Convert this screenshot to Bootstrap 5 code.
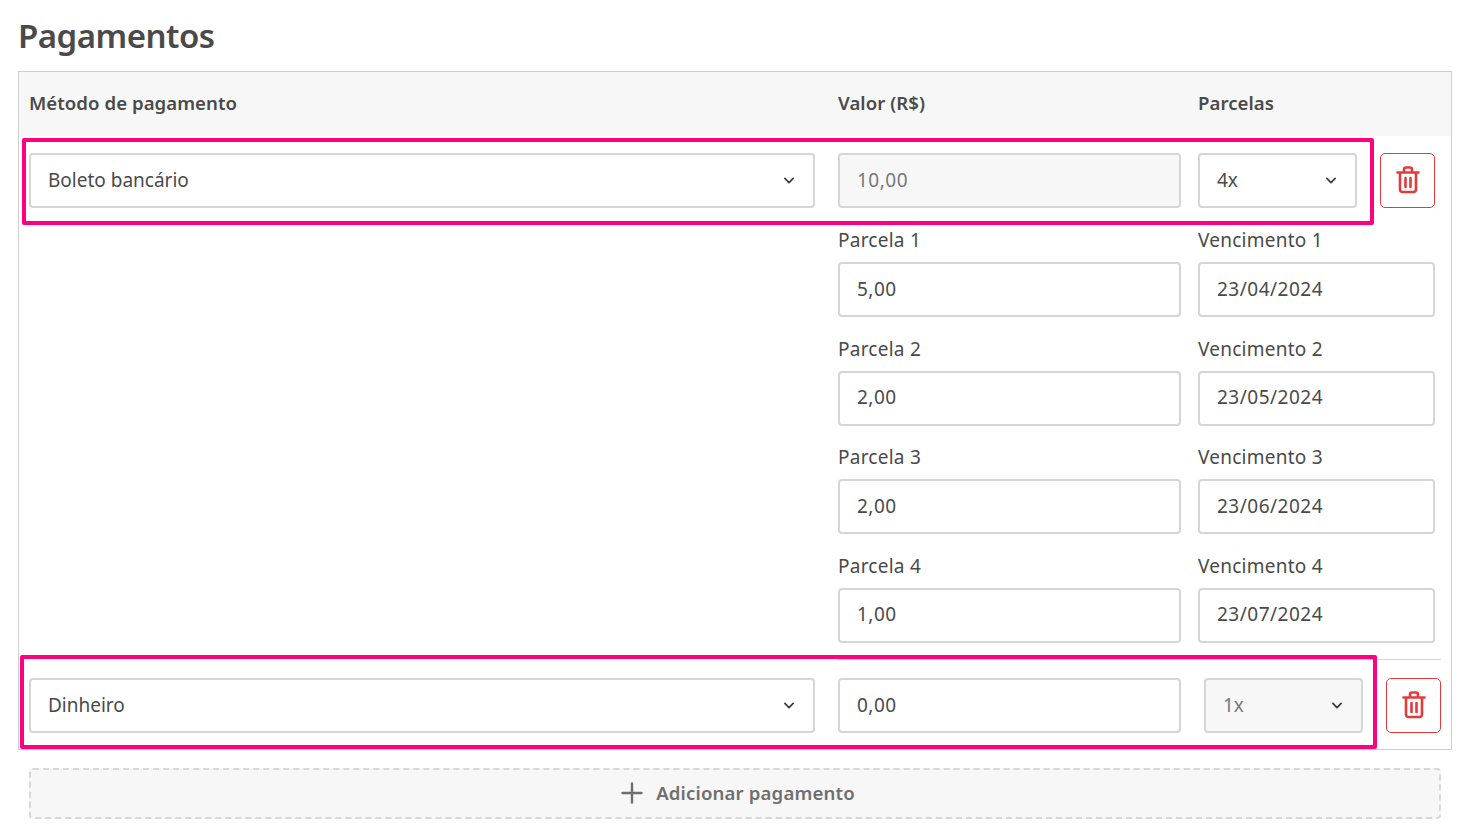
<!DOCTYPE html>
<html lang="pt-BR">
<head>
<meta charset="utf-8">
<title>Pagamentos</title>
<link href="https://cdn.jsdelivr.net/npm/bootstrap@5.3.0/dist/css/bootstrap.min.css" rel="stylesheet">
<style>
html,body{height:838px;overflow:hidden;background:#fff}
body{font-family:"Noto Sans","Open Sans",sans-serif;color:#4a4a4a;padding:0 8px 0 18px}
.pg-title{font-size:33px;font-weight:600;letter-spacing:-.5px;line-height:44px;margin:14px 0 13px;color:#4a4a4a}
.pay-box{position:relative;border:1px solid #cfcfcf;height:679px;width:1434px}
.pay-head{height:64px;background:#f7f7f7;padding:0 10px 2px;display:flex;align-items:center;font-weight:600;font-size:18.6px;color:#4a4a4a;letter-spacing:.05px}
.c-method{width:786px;margin-right:23px;flex:none}
.c-value{width:343px;flex:none}
.c-gap{margin-right:17px}
.c-gap2{margin-right:23px}
.c-par{width:159px;flex:none}
.pay-row{display:flex;padding:0 10px}
.row-a{padding-top:17px}
.sub-rows{padding:16px 0 0 819px}
.sub-row{display:flex;height:108.5px}
.sub-col{width:343px;margin-right:17px}
.sub-col2{width:237px}
.sub-lbl{font-size:19px;line-height:32px;margin:0;height:38px;color:#4a4a4a;display:block;letter-spacing:.25px}
.fld.form-control,.fld.form-select{height:55px;font-size:19px;color:#4a4a4a;padding:0 17px 1px;border:2px solid #d6d6d6;border-radius:4px;box-shadow:none}
.fld.form-control{letter-spacing:.5px;padding-bottom:2px}
.fld.form-select{background-image:url("data:image/svg+xml,%3csvg xmlns='http://www.w3.org/2000/svg' viewBox='0 0 16 16'%3e%3cpath fill='none' stroke='%23404040' stroke-linecap='round' stroke-linejoin='round' stroke-width='2.6' d='m2 5 6 6 6-6'/%3e%3c/svg%3e");background-position:right 17px center;background-size:14px 11px}
.fld.is-off,.fld.is-off:disabled{background-color:#f7f7f7;color:#777;opacity:1}
.trash-btn{width:55px;height:55px;padding:0 0 1px;border:1px solid #e23b3b;border-radius:5px;background:#fff;display:flex;align-items:center;justify-content:center;flex:none}
.sep-line{height:1px;background:#d4d4d4;margin:1px 10px 0 819px}
.row-b{padding-top:18px}
.gap-b{margin-right:23px}
.pink-a,.pink-b{position:absolute;border:4px solid #ff0080;border-radius:2px;pointer-events:none}
.pink-a{left:3px;top:66px;width:1352px;height:87px}
.pink-b{left:1px;top:583px;width:1357px;height:94px}
.add-pay{display:flex;align-items:center;justify-content:center;gap:13px;width:1412px;height:51px;margin:18px 0 0 11px;background:#f7f7f7;border:2px dashed #d8d8d8;border-radius:4px;color:#6f6f6f;font-size:18.6px;font-weight:600;letter-spacing:.15px;padding:0 0 2px 6px}
</style>
</head>
<body>
<h2 class="pg-title">Pagamentos</h2>
<div class="pay-box">
  <div class="pay-head">
    <div class="c-method">Método de pagamento</div>
    <div class="c-value c-gap">Valor (R$)</div>
    <div>Parcelas</div>
  </div>
  <div class="pay-row row-a">
    <select class="form-select fld c-method"><option>Boleto bancário</option></select>
    <input class="form-control fld is-off c-value c-gap" value="10,00" disabled>
    <select class="form-select fld c-par c-gap2"><option>4x</option></select>
    <button class="trash-btn" type="button" aria-label="Excluir"><svg width="24" height="28" viewBox="0 0 24 28" fill="none" stroke="#e23b3b" stroke-width="2.6" stroke-linecap="round" stroke-linejoin="round"><path d="M1.5 6.5h21M8 6V3.5A2 2 0 0 1 10 1.5h4a2 2 0 0 1 2 2V6M4 7v16.5a2.5 2.5 0 0 0 2.5 2.5h11a2.5 2.5 0 0 0 2.5-2.5V7M9.5 12v9M14.5 12v9"/></svg></button>
  </div>
  <div class="sub-rows">
    <div class="sub-row"><div class="sub-col"><label class="sub-lbl">Parcela 1</label><input class="form-control fld" value="5,00"></div><div class="sub-col2"><label class="sub-lbl">Vencimento 1</label><input class="form-control fld" value="23/04/2024"></div></div>
    <div class="sub-row"><div class="sub-col"><label class="sub-lbl">Parcela 2</label><input class="form-control fld" value="2,00"></div><div class="sub-col2"><label class="sub-lbl">Vencimento 2</label><input class="form-control fld" value="23/05/2024"></div></div>
    <div class="sub-row"><div class="sub-col"><label class="sub-lbl">Parcela 3</label><input class="form-control fld" value="2,00"></div><div class="sub-col2"><label class="sub-lbl">Vencimento 3</label><input class="form-control fld" value="23/06/2024"></div></div>
    <div class="sub-row"><div class="sub-col"><label class="sub-lbl">Parcela 4</label><input class="form-control fld" value="1,00"></div><div class="sub-col2"><label class="sub-lbl">Vencimento 4</label><input class="form-control fld" value="23/07/2024"></div></div>
  </div>
  <div class="sep-line"></div>
  <div class="pay-row row-b">
    <select class="form-select fld c-method"><option>Dinheiro</option></select>
    <input class="form-control fld c-value gap-b" value="0,00">
    <select class="form-select fld is-off c-par c-gap2" disabled><option>1x</option></select>
    <button class="trash-btn" type="button" aria-label="Excluir"><svg width="24" height="28" viewBox="0 0 24 28" fill="none" stroke="#e23b3b" stroke-width="2.6" stroke-linecap="round" stroke-linejoin="round"><path d="M1.5 6.5h21M8 6V3.5A2 2 0 0 1 10 1.5h4a2 2 0 0 1 2 2V6M4 7v16.5a2.5 2.5 0 0 0 2.5 2.5h11a2.5 2.5 0 0 0 2.5-2.5V7M9.5 12v9M14.5 12v9"/></svg></button>
  </div>
  <div class="pink-a"></div>
  <div class="pink-b"></div>
</div>
<button class="add-pay" type="button"><svg width="22" height="22" viewBox="0 0 22 22" fill="none" stroke="#6f6f6f" stroke-width="2.4" stroke-linecap="round"><path d="M11 1.5v19M1.5 11h19"/></svg><span>Adicionar pagamento</span></button>
<script src="https://cdn.jsdelivr.net/npm/bootstrap@5.3.0/dist/js/bootstrap.bundle.min.js"></script>
</body>
</html>
